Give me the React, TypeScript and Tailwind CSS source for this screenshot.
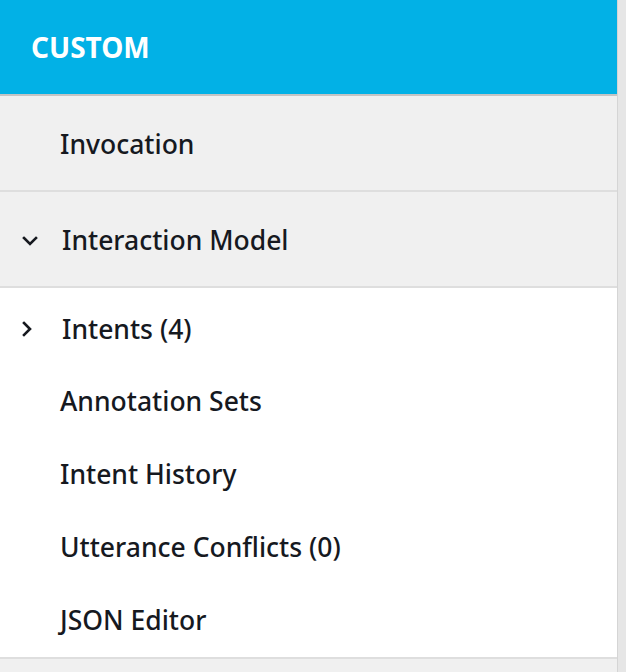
import React from "react";

function ChevronDown() {
  return (
    <svg width="18" height="12" viewBox="0 0 18 12" fill="none">
      <path d="M3 3 L9 9 L15 3" stroke="#16191f" strokeWidth="2.6" strokeLinecap="square" />
    </svg>
  );
}

function ChevronRight() {
  return (
    <svg width="12" height="18" viewBox="0 0 12 18" fill="none">
      <path d="M3 3 L9 9 L3 15" stroke="#16191f" strokeWidth="2.6" strokeLinecap="square" />
    </svg>
  );
}

export default function App() {
  const items = ["Annotation Sets", "Intent History", "Utterance Conflicts (0)", "JSON Editor"];
  return (
    <div
      className="w-[626px] h-[672px] bg-[#e6e6e6] text-[#16191f] overflow-hidden"
      style={{ fontFamily: '"Noto Sans", sans-serif' }}
    >
      <div className="w-[618px] border-r border-[#d5d5d5] flex flex-col">
        <div className="h-[96px] bg-[#02b1e6] border-b-2 border-[#c4c4c4] flex items-center pl-[31px]">
          <span className="text-white font-bold text-[28px]">CUSTOM</span>
        </div>
        <div className="h-[96px] bg-[#f0f0f0] border-b-2 border-[#dedede] flex items-center pl-[60px] pt-[3px]">
          <span className="text-[26.5px] font-medium">Invocation</span>
        </div>
        <div className="h-[96px] bg-[#f0f0f0] border-b-2 border-[#dedede] flex items-center pl-[21px] pt-[3px]">
          <span className="w-[41px] flex items-center"><ChevronDown /></span>
          <span className="text-[26.5px] font-medium">Interaction Model</span>
        </div>
        <div className="bg-white border-b-2 border-[#dedede] flex flex-col pt-[5px] h-[371px]">
          <div className="h-[74px] flex items-center pl-[21px]">
            <span className="w-[41px] flex items-center"><ChevronRight /></span>
            <span className="text-[26.5px] font-medium">Intents (4)</span>
          </div>
          {items.map((t) => (
            <div key={t} className="h-[74px] flex items-center pl-[60px]">
              <span className="text-[26.5px] font-medium">{t}</span>
            </div>
          ))}
        </div>
        <div className="h-[20px] bg-[#f0f0f0]" />
      </div>
    </div>
  );
}
